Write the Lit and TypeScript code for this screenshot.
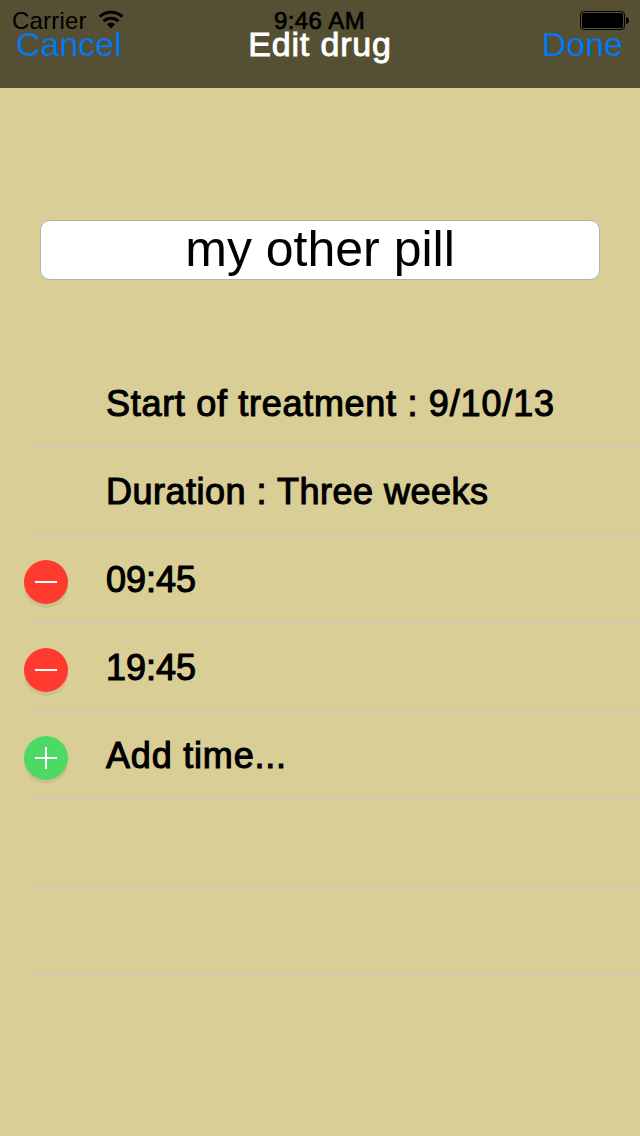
import { LitElement, html, css, svg } from "lit";
import { customElement, property } from "lit/decorators.js";

@customElement("drug-row")
class DrugRow extends LitElement {
  @property() kind = "";

  static styles = css`
    :host { display: block; height: 88px; }
    .row { display: grid; grid-template-columns: 30px 1fr; height: 88px; }
    .line { grid-column: 2; grid-row: 1; border-bottom: 1px solid #c8c7cc; }
    .content { grid-column: 1 / 3; grid-row: 1; display: flex; align-items: center; padding-left: 20px; }
    .icon { width: 52px; height: 56px; flex: none; margin-right: 34px; margin-top: 7px; }
    .label { white-space: pre; line-height: 42px; }
  `;

  render() {
    return html`<div class="row">
      <div class="line"></div>
      <div class="content">
        <svg class="icon" viewBox="0 0 52 56">
          ${this.kind
            ? svg`<circle cx="26" cy="30" r="22" fill="#000" fill-opacity=".06"></circle>
                <circle cx="26" cy="26" r="22" fill=${this.kind === "add" ? "#4cd964" : "#ff3b30"}></circle>
                <path d=${this.kind === "add" ? "M15 26H37M26 15V37" : "M15 26H37"} stroke="#fff" stroke-width="2"></path>`
            : ""}
        </svg>
        <span class="label"><slot></slot></span>
      </div>
    </div>`;
  }
}

@customElement("app-root")
class AppRoot extends LitElement {
  static styles = css`
    :host {
      display: block;
      height: 1136px;
      overflow: hidden;
      background: #d9ce96;
      color: #000;
      font-family: "Liberation Sans", Arial, sans-serif;
    }
    .top { height: 88px; background: #555033; display: grid; grid-template-rows: 88px; grid-template-columns: 100%; }
    .status, .nav { grid-area: 1 / 1; display: grid; grid-template-columns: 1fr auto 1fr; align-items: start; }
    .status { font-size: 24px; line-height: 28px; padding: 7px 11px 0 12px; z-index: 1; }
    .carrier { display: flex; letter-spacing: .2px; gap: 11px; }
    .wifi { width: 26px; height: 19px; margin-top: 3px; }
    .clock { letter-spacing: .45px; margin-left: -2px; -webkit-text-stroke: .7px #000; }
    .battery { width: 50px; height: 19px; margin-top: 4px; justify-self: end; }
    .nav { font-size: 34px; line-height: 40px; padding: 24px 17px 0 16px; }
    .action { color: #007aff; -webkit-text-stroke: .25px #555033; }
    .done { justify-self: end; }
    .title { color: #fff; letter-spacing: .85px; margin-left: 1px; -webkit-text-stroke: .9px #fff; }
    .field {
      box-sizing: border-box;
      height: 60px;
      margin: 132px 40px 80px;
      border: 1px solid #b8b4a0;
      border-radius: 10px;
      background: #fff;
      font-size: 50px;
      line-height: 56px;
      text-align: center;
    }
    .list { font-size: 36px; -webkit-text-stroke: 1.1px #000; }
    .start { letter-spacing: .7px; }
    .date { letter-spacing: .85px; }
    .duration { letter-spacing: .5px; }
    .time { letter-spacing: 0; }
    .add { letter-spacing: .8px; }
  `;

  render() {
    return html`
      <div class="top">
        <div class="nav">
          <span class="action">Cancel</span>
          <span class="title">Edit drug</span>
          <span class="action done">Done</span>
        </div>
        <div class="status">
          <div class="carrier">
            <span>Carrier</span>
            <svg class="wifi" viewBox="0 0 26 19">
              <path d="M1.7 6.7C8 .9 18 .9 24.3 6.7M5.5 11.2C9.8 7.2 16.2 7.2 20.5 11.2" fill="none" stroke="#000" stroke-width="3"></path>
              <path d="M8.8 14.2Q13 10.8 17.2 14.2L13 18.6Z"></path>
            </svg>
          </div>
          <span class="clock">9:46 AM</span>
          <svg class="battery" viewBox="0 0 50 19">
            <rect x="1.5" y=".5" width="44" height="18" rx="3" fill="none" stroke="#000"></rect>
            <rect x="3" y="2" width="41" height="15" rx="1.5"></rect>
            <path d="M47 6Q50 6.5 50 9.5T47 13Z"></path>
          </svg>
        </div>
      </div>
      <div class="field">my other pill</div>
      <div class="list">
        <drug-row><span class="start">Start of treatment : </span><span class="date">9/10/13</span></drug-row>
        <drug-row class="duration">Duration : Three weeks</drug-row>
        <drug-row class="time" kind="remove">09:45</drug-row>
        <drug-row class="time" kind="remove">19:45</drug-row>
        <drug-row class="add" kind="add">Add time...</drug-row>
        <drug-row></drug-row>
        <drug-row></drug-row>
      </div>
    `;
  }
}
